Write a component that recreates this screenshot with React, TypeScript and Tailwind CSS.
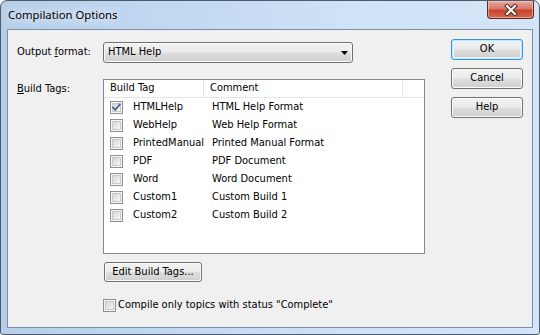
import React from "react";

const UI = { fontFamily: "'DejaVu Sans Condensed', 'DejaVu Sans', sans-serif", fontSize: "11px" };

function Check({ checked = false }: { checked?: boolean }) {
  return (
    <div className="relative w-[13px] h-[13px] shrink-0 border border-[#8e8f8f] bg-[#f6f6f6] p-[1px]">
      <div className="w-full h-full border border-[#c9c9c9] bg-[linear-gradient(135deg,#d6d6d6_0%,#e8e8e8_55%,#f8f8f8_100%)]" />
      {checked && (
        <svg className="absolute left-0 top-0" width="11" height="11" viewBox="0 0 11 11">
          <path d="M2.2 5.6 L4.3 7.8 L8.8 2.4" fill="none" stroke="#4a5f97" strokeWidth="1.8" strokeLinecap="square" />
        </svg>
      )}
    </div>
  );
}

function Btn({ children, def = false, className = "" }: { children: React.ReactNode; def?: boolean; className?: string }) {
  return (
    <div
      className={
        "flex items-center justify-center rounded-[3px] border text-black bg-[linear-gradient(#f2f2f2_0%,#ebebeb_48%,#dddddd_52%,#cfcfcf_100%)] " +
        (def
          ? "border-[#3c8fd0] shadow-[inset_0_0_0_1px_#b9eafd,inset_0_0_0_2px_#e4f6fd] "
          : "border-[#707070] shadow-[inset_0_0_0_1px_#fbfbfb] ") +
        className
      }
    >
      {children}
    </div>
  );
}

const rows: [string, string, boolean][] = [
  ["HTMLHelp", "HTML Help Format", true],
  ["WebHelp", "Web Help Format", false],
  ["PrintedManual", "Printed Manual Format", false],
  ["PDF", "PDF Document", false],
  ["Word", "Word Document", false],
  ["Custom1", "Custom Build 1", false],
  ["Custom2", "Custom Build 2", false],
];

export default function App() {
  return (
    <div className="w-[540px] h-[335px] overflow-hidden bg-white">
      <div className="w-[540px] h-[335px] flex flex-col rounded-t-[7px] rounded-b-[3px] border border-[#4b5b6c] bg-[linear-gradient(90deg,#b6cee9_0%,#c1d8f1_30%,#cfe2f6_65%,#d4e5f7_100%)]">
        {/* Title bar */}
        <div className="h-[28px] flex pl-[7px] pr-[5px] shrink-0">
          <div
            className="self-center text-black [text-shadow:0_0_8px_#ffffff,0_0_12px_#ffffff]"
            style={{ fontFamily: "'Noto Sans', sans-serif", fontSize: "11.3px" }}
          >
            Compilation Options
          </div>
          <div className="ml-auto w-[47px] h-[18px] rounded-b-[4px] border border-t-0 border-[#5a2a24] bg-[linear-gradient(#e8a89c_0%,#d8786a_45%,#c7452f_55%,#d5664e_100%)] flex items-center justify-center shadow-[inset_0_0_0_1px_rgba(255,220,210,0.5)]">
            <svg width="14" height="12" viewBox="0 0 14 12">
              <path d="M3 2 L11 10 M11 2 L3 10" stroke="#3b2320" strokeWidth="4" strokeLinecap="square" />
              <path d="M3 2 L11 10 M11 2 L3 10" stroke="#ffffff" strokeWidth="2.2" strokeLinecap="square" />
            </svg>
          </div>
        </div>

        {/* Client area */}
        <div className="mx-[6px] h-[299px] shrink-0 border border-[#7a8ea4] bg-[#f0f0f0] flex" style={UI}>
          {/* Left column */}
          <div className="pl-[9px] pt-[12px] flex flex-col">
            <div className="flex items-center h-[21px]">
              <div className="w-[86px]">
                Output <span className="underline">f</span>ormat:
              </div>
              <div className="w-[250px] h-[21px] rounded-[3px] border border-[#707070] bg-[linear-gradient(#f2f2f2_0%,#ebebeb_48%,#dddddd_52%,#cfcfcf_100%)] shadow-[inset_0_0_0_1px_#fbfbfb] flex items-center pl-[4px] pr-[4px]">
                <span>HTML Help</span>
                <svg className="ml-auto" width="7" height="4" viewBox="0 0 7 4">
                  <path d="M0 0 H7 L3.5 4 Z" fill="#000" />
                </svg>
              </div>
            </div>

            <div className="flex mt-[16px]">
              <div className="w-[86px] pt-[2px]">
                <span className="underline">B</span>uild Tags:
              </div>
              <div className="w-[322px] h-[175px] border border-[#828790] bg-white flex flex-col">
                <div className="h-[18px] flex border-b border-[#e5e5e5] shrink-0">
                  <div className="w-[100px] pl-[6px] border-r border-[#e5e5e5] flex items-center">Build Tag</div>
                  <div className="w-[199px] pl-[6px] border-r border-[#e5e5e5] flex items-center">Comment</div>
                </div>
                {rows.map(([tag, comment, checked]) => (
                  <div key={tag} className="h-[18px] flex items-center shrink-0">
                    <div className="w-[100px] pl-[6px] flex items-center">
                      <Check checked={checked} />
                      <span className="ml-[10px]">{tag}</span>
                    </div>
                    <div className="pl-[8px]">{comment}</div>
                  </div>
                ))}
              </div>
            </div>

            <Btn className="mt-[8px] ml-[87px] w-[98px] h-[20px]">Edit Build Tags...</Btn>

            <div className="mt-[17px] ml-[86px] flex items-center h-[13px]">
              <Check />
              <span className="ml-[2px]">Compile only topics with status "Complete"</span>
            </div>
          </div>

          {/* Right column */}
          <div className="ml-auto pr-[9px] pt-[9px] flex flex-col gap-[8px]">
            <Btn def className="w-[72px] h-[21px]">OK</Btn>
            <Btn className="w-[72px] h-[21px]">Cancel</Btn>
            <Btn className="w-[72px] h-[21px]">Help</Btn>
          </div>
        </div>
      </div>
    </div>
  );
}
